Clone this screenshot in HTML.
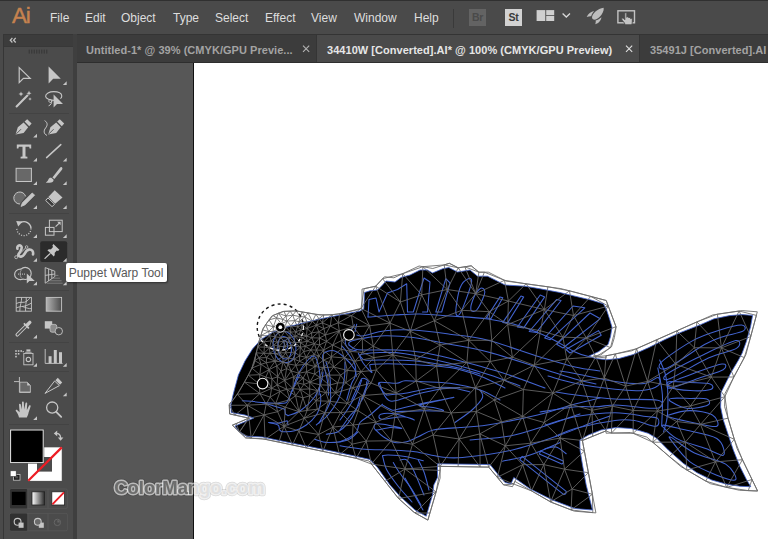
<!DOCTYPE html>
<html lang="en">
<head>
<meta charset="utf-8">
<title>Adobe Illustrator - Puppet Warp Tool</title>
<style>
*{box-sizing:border-box;margin:0;padding:0}
html,body{width:768px;height:539px;overflow:hidden;background:#535353;font-family:"Liberation Sans",sans-serif}
#app{position:relative;width:768px;height:539px;overflow:hidden;background:#4a4a4a}
/* menu bar */
#menubar{position:absolute;left:0;top:0;width:768px;height:34px;background:#4a4a4a;border-top:1px solid #303030}
#menubar .logo{position:absolute;left:12px;top:2px;font-size:22.4px;line-height:26px;color:#c5824f;letter-spacing:-1.1px;-webkit-text-stroke:0.45px #c5824f}
#menubar .mi{position:absolute;top:9px;font-size:12px;line-height:16px;color:#dedede;white-space:nowrap}
#menubar .vdiv{position:absolute;left:453px;top:8px;width:1px;height:19px;background:#3a3a3a}
.sq{position:absolute;top:8px;width:17px;height:17px;font-size:10.5px;font-weight:bold;line-height:17px;text-align:center;letter-spacing:-0.3px}
/* tab bar */
#tabs{position:absolute;left:76px;top:34px;width:692px;height:29px;background:#3c3c3c;border-left:1px solid #343434;border-top:1px solid #343434;border-bottom:1px solid #2e2e2e}
#gap{position:absolute;left:73px;top:34px;width:4px;height:505px;background:#3f3f3f}
#tabs .tab{position:absolute;top:0;height:27px;font-size:11px;font-weight:bold;line-height:30px;overflow:hidden;white-space:nowrap;color:#a3a3a3;letter-spacing:0.04px}
#tabs .tab.on{background:#4a4a4a;color:#e6e6e6;border-left:1px solid #353535;border-right:1px solid #353535}
#tabs .x{position:absolute;top:0;font-weight:normal;font-size:13px;line-height:27px}
/* canvas */
#canvas{position:absolute;left:77px;top:63px;width:691px;height:476px;background:#575757}
#art{position:absolute;left:116px;top:0;width:575px;height:476px;background:#fff;border-left:1px solid #111}
/* toolbar */
#tools{position:absolute;left:3px;top:34px;width:71px;height:505px;background:#4b4b4b;border:1px solid #363636;border-bottom:0;border-right-color:#3f3f3f}
#tools .hd{position:absolute;left:0;top:0;width:69px;height:11.5px;background:#3c3c3c;border-bottom:1px solid #383838}
#tools .sep{position:absolute;left:5px;width:60px;height:1px;background:#434343}
#tip{position:absolute;left:66px;top:263px;width:100.5px;height:18.5px;background:#fff;border-radius:2px;box-shadow:1px 1px 2px rgba(0,0,0,0.45);font-size:12px;line-height:20px;color:#585858;padding-left:2.7px;white-space:nowrap;overflow:hidden}
#wm{position:absolute;left:0;top:0}
svg{position:absolute;left:0;top:0;overflow:visible}
</style>
</head>
<body>
<div id="app">
  <div id="menubar">
    <div class="logo">Ai</div>
    <div class="mi" style="left:50px">File</div>
    <div class="mi" style="left:85px">Edit</div>
    <div class="mi" style="left:121px">Object</div>
    <div class="mi" style="left:173px">Type</div>
    <div class="mi" style="left:215px">Select</div>
    <div class="mi" style="left:265px">Effect</div>
    <div class="mi" style="left:311px">View</div>
    <div class="mi" style="left:354px">Window</div>
    <div class="mi" style="left:414px">Help</div>
    <div class="vdiv"></div>
    <div class="sq" style="left:469px;background:#636363;color:#4a4a4a">Br</div>
    <div class="sq" style="left:505px;background:#d2d2d2;color:#3a3a3a">St</div>
    <svg width="768" height="34" viewBox="0 1 768 34" style="left:0;top:0">
      <g fill="#cfcfcf">
        <rect x="536.6" y="10.1" width="8.7" height="10.9"/><rect x="546.2" y="10.1" width="8" height="5.1"/><rect x="546.2" y="16" width="8" height="5"/>
        <path d="M562.6 13.6 L566.3 17 L570 13.6" fill="none" stroke="#d8d8d8" stroke-width="1.3"/>
        <g fill="#bdbdbd"><path d="M603.600 7.700 C604.300 11.400 601 16.600 596.300 19.300 C594.600 20.200 592.300 19.600 592 17.800 C591.800 13.600 597.800 8.400 603.600 7.700 Z"/>
        <path d="M594.200 10.900 C591 11.300 588 13.600 586.700 17 C588.600 16.300 590.200 16 591.200 16.200 C591.700 14.200 592.800 12.300 594.200 10.900 Z"/>
        <path d="M601.400 17.300 C601.200 20.400 598.800 23.300 595.200 24.300 C595.800 22.600 595.900 21.200 595.600 20.400 C597.800 20 599.800 18.800 601.400 17.300 Z"/></g>
        <rect x="617.9" y="10.8" width="16.6" height="12" fill="none" stroke="#c4c4c4" stroke-width="1.4"/>
        <path d="M625.200 24.800 C624.400 22.200 622.600 21 621.800 19.400 C621.400 18.200 622.800 17.600 623.700 18.500 L624.800 19.700 V13.600 C624.800 12.300 626.800 12.300 626.800 13.600 V17.300 C627 16.400 628.600 16.400 628.800 17.500 V18 C629 17.100 630.600 17.300 630.600 18.200 V18.800 C630.800 18.100 632.300 18.200 632.300 19.300 V22 C632.300 23.100 632 24 631.500 24.800 Z" fill="#c4c4c4" stroke="#4a4a4a" stroke-width="0.9"/>
      </g>
    </svg>
  </div>
    <div id="tabs">
    <div class="tab" style="left:0;width:239px;padding-left:9px">Untitled-1* @ 39% (CMYK/GPU Previe...</div>
    <div class="tab on" style="left:239px;width:324px;padding-left:10px">34410W [Converted].AI* @ 100% (CMYK/GPU Preview)</div>
    <svg width="692" height="28" viewBox="77 35 692 28" style="left:0;top:0"><path d="M303 45.700l6.200 6.200M309.200 45.700l-6.200 6.200" stroke="#b4b4b4" stroke-width="1.1" fill="none"/><path d="M626 45.700l6.200 6.200M632.200 45.700l-6.200 6.200" stroke="#e0e0e0" stroke-width="1.1" fill="none"/></svg>
    <div class="tab" style="left:563px;width:128px;padding-left:10px">35491J [Converted].AI</div>
  </div>
  <div id="canvas"><div id="art"></div></div>
<svg id="fish" width="768" height="539" viewBox="0 0 768 539">
  <defs><clipPath id="fc"><path d="M234.4 389.8 L238.4 375.0 L245.0 361.0 L252.5 349.0 L261.0 339.5 L272.5 332.4 L285.0 327.6 L302.5 323.2 L320.0 319.0 L340.0 315.0 L360.0 311.0 L363.8 308.8 L364.5 292.5 L370.0 290.8 L377.5 290.0 L382.5 285.0 L386.0 281.0 L395.0 282.0 L401.0 277.5 L410.0 275.0 L420.0 270.0 L427.5 270.0 L432.5 273.0 L442.5 268.8 L448.8 267.5 L457.5 272.0 L470.0 270.0 L477.5 276.2 L487.5 276.2 L497.5 281.2 L505.0 285.0 L525.0 286.2 L540.0 288.8 L560.0 292.5 L575.0 296.2 L591.0 300.0 L603.4 303.8 L606.6 310.0 L609.7 319.4 L612.0 327.2 L610.5 336.6 L608.1 344.4 L598.8 351.5 L588.6 356.2 L595.6 358.5 L606.6 359.8 L619.0 358.5 L633.1 354.6 L648.8 347.6 L664.4 339.8 L680.0 332.7 L700.0 324.9 L714.0 318.8 L729.7 315.6 L742.2 314.6 L752.6 315.4 L750.5 327.0 L746.3 341.7 L742.2 353.0 L738.5 360.0 L731.0 372.5 L726.0 382.5 L721.0 392.5 L720.6 407.0 L723.3 420.0 L728.3 435.0 L733.3 450.0 L740.0 466.7 L746.7 480.0 L750.8 486.7 L740.0 486.3 L726.7 484.2 L711.7 480.0 L696.7 472.5 L683.3 463.3 L668.3 450.0 L656.7 438.3 L648.3 433.3 L640.0 430.8 L631.0 428.5 L616.0 427.5 L601.0 430.0 L588.5 435.0 L579.8 440.0 L580.0 450.0 L582.5 465.0 L586.2 485.0 L592.5 510.0 L575.0 508.6 L552.5 500.0 L530.0 488.8 L517.5 480.0 L513.8 477.5 L511.0 483.8 L505.0 482.5 L497.5 473.8 L490.0 464.5 L437.5 463.8 L437.5 477.5 L433.8 485.0 L432.5 495.0 L428.8 507.5 L426.2 516.2 L415.0 510.0 L400.0 496.2 L390.0 485.0 L377.5 467.5 L370.0 459.5 L350.0 455.0 L332.5 451.2 L307.5 446.2 L282.5 441.2 L262.5 437.0 L246.2 436.2 L238.8 431.2 L235.0 426.0 L237.5 425.0 L253.8 418.0 L245.0 415.0 L231.2 412.5 L231.0 404.5 L232.8 396.0 Z"/></clipPath><path id="msh" d="M434.3 320.7L440.2 345.0M347.3 370.4L344.3 358.0M311.9 337.8L307.3 341.2M402.7 273.7L382.6 278.7M297.6 326.9L300.8 329.9M271.2 340.8L273.9 344.9M344.3 358.0L333.7 367.0M265.1 439.3L284.0 426.2M273.9 344.9L275.0 349.2M451.2 412.9L459.1 439.0M721.4 347.9L694.3 347.7M382.6 278.7L375.7 286.2M734.3 439.3L728.0 418.2M433.1 435.0L451.2 412.9M322.8 451.4L339.5 454.8M700.5 424.4L676.7 421.5M335.5 392.9L337.7 382.9M290.2 311.1L292.8 315.2M317.6 390.7L325.9 392.7M306.4 336.1L300.8 329.9M308.0 312.9L312.4 321.4M728.0 418.2L724.9 396.7M278.2 332.6L275.1 336.8M322.4 322.9L323.9 328.6M323.8 314.9L315.9 314.3M489.1 311.7L491.8 340.3M300.3 389.4L303.9 384.4M289.8 337.6L294.8 336.3M501.6 421.9L522.6 416.4M352.6 387.8L335.5 392.9M550.6 501.9L543.8 464.6M490.2 361.5L491.8 340.3M507.7 324.5L491.8 340.3M290.2 311.1L285.9 316.1M415.1 513.0L429.9 513.0M564.5 469.2L560.1 438.1M287.0 321.1L285.0 326.4M284.6 331.5L289.8 337.6M361.0 371.7L371.1 383.1M315.9 314.3L308.0 312.9M595.8 356.8L606.0 355.8M320.0 377.3L309.8 382.3M283.0 362.0L275.1 361.2M280.8 337.6L275.1 336.8M494.3 399.9L504.1 380.3M271.2 340.8L269.6 335.8M339.5 454.8L332.9 427.1M429.9 513.0L436.1 491.9M353.3 326.8L338.2 322.8M440.1 466.4L459.1 439.0M739.1 311.0L717.4 314.2M728.0 418.2L700.5 424.4M271.9 378.7L269.0 369.7M259.1 341.2L263.9 341.9M444.2 264.9L449.3 263.3M362.6 352.5L362.3 338.5M478.9 272.2L475.7 293.7M608.3 306.1L606.2 300.5M717.4 314.2L696.9 321.9M294.8 336.3L290.6 332.0M278.5 313.2L273.0 315.5M711.3 377.1L690.5 405.9M633.2 433.3L657.4 411.1M319.5 345.0L316.5 350.1M324.8 412.7L317.3 409.2M544.2 422.5L522.6 416.4M319.0 356.0L323.5 360.1M310.9 349.9L314.4 343.7M361.0 308.4L390.0 323.1M273.0 315.5L269.1 319.9M531.5 490.9L550.6 501.9M611.4 433.1L633.2 410.5M297.6 326.9L302.0 325.1M324.8 412.7L304.2 418.3M276.7 365.9L269.0 369.7M362.6 352.5L350.2 351.3M290.9 325.9L295.6 331.9M311.9 337.8L319.5 338.0M717.4 314.2L721.4 347.9M271.2 340.8L277.3 342.2M280.8 337.6L277.3 342.2M610.5 347.6L616.0 326.7M685.4 442.1L715.5 461.9M299.6 361.4L295.9 365.3M256.3 352.8L251.9 368.1M395.3 413.7L396.1 392.9M362.3 395.6L376.0 422.2M586.3 338.0L562.9 337.1M273.9 344.9L279.1 346.4M269.1 319.9L273.4 326.7M256.3 352.8L258.8 357.9M566.8 358.9L552.9 393.1M547.9 286.8L544.3 309.6M277.7 376.8L281.0 371.1M322.4 322.9L330.3 326.0M508.4 301.0L489.1 311.7M283.0 362.0L281.0 371.1M416.2 381.0L392.8 354.9M284.6 331.5L285.0 326.4M488.7 467.1L479.8 433.9M264.0 414.9L277.6 411.7M376.4 370.0L371.1 383.1M300.5 347.2L305.5 346.3M298.8 373.2L306.6 371.8M501.6 421.9L505.3 445.8M288.0 363.9L288.8 358.1M395.3 413.7L391.3 440.7M494.3 399.9L476.4 411.5M501.6 421.9L494.3 399.9M464.8 266.8L471.2 265.8M726.7 487.4L752.0 479.5M458.1 466.6L459.1 439.0M275.6 353.7L275.0 349.2M299.0 321.7L306.9 321.9M331.8 314.7L322.4 322.9M284.6 380.5L286.6 368.6M351.5 315.5L369.6 325.8M284.0 426.2L264.0 414.9M444.2 264.9L458.2 267.8M513.7 484.0L531.5 490.9M322.8 451.4L318.7 434.5M237.2 394.2L247.2 405.2M345.9 382.8L337.7 382.9M309.8 395.8L300.3 389.4M282.9 319.5L281.3 323.8M275.1 336.8L269.6 335.8M439.7 388.4L451.2 412.9M347.3 370.4L355.1 361.2M312.4 359.4L314.3 354.5M323.5 350.2L323.5 360.1M410.3 331.3L392.8 354.9M595.8 356.8L610.5 347.6M331.3 356.8L333.7 367.0M292.9 388.5L300.3 389.4M307.2 328.5L302.0 325.1M534.2 365.2L523.4 389.5M280.2 391.3L271.6 388.3M290.9 325.9L290.6 332.0M283.0 362.0L288.0 363.9M304.2 418.3L318.7 434.5M288.0 363.9L295.9 365.3M332.9 427.1L352.0 444.2M323.4 367.6L323.5 360.1M355.1 361.2L374.0 357.6M257.7 347.0L256.3 352.8M582.4 440.5L592.0 410.3M290.1 399.6L275.7 403.6M286.8 389.3L277.1 384.9M341.9 340.3L341.4 349.2M461.8 310.3L447.2 289.5M369.6 325.8L373.3 346.3M358.2 410.8L340.6 412.6M512.4 357.2L490.2 361.5M319.5 345.0L314.4 343.7M352.6 387.8L347.3 403.4M392.8 354.9L373.3 346.3M302.9 397.8L299.0 411.7M314.6 374.1L320.0 377.3M669.4 456.6L685.4 442.1M633.2 410.5L647.5 381.4M504.5 280.3L475.7 293.7M748.3 490.6L757.6 491.0M256.3 352.8L254.7 360.7M733.9 377.0L711.3 377.1M320.3 384.9L317.6 390.7M711.3 377.1L721.4 347.9M344.3 358.0L341.4 349.2M526.1 283.8L504.5 280.3M362.3 338.5L353.3 326.8M412.5 444.3L391.3 440.7M276.6 317.8L273.4 326.7M302.1 311.9L300.3 316.7M458.1 466.6L440.1 466.4M339.3 330.8L326.6 341.4M275.1 336.8L277.3 342.2M299.6 355.9L306.1 357.3M424.4 408.7L416.2 381.0M239.5 432.0L251.2 438.2M286.8 389.3L292.9 388.5M292.5 445.0L298.9 431.0M504.5 280.3L484.4 272.2M229.3 405.3L234.9 415.1M608.3 306.1L573.5 315.5M480.1 467.0L488.7 467.1M436.6 365.8L415.7 359.5M333.7 367.0L323.4 367.6M444.2 264.9L447.2 289.5M284.6 331.5L280.8 337.6M229.3 405.3L229.6 413.9M251.2 438.2L265.1 439.3M497.3 477.3L505.3 445.8M705.8 481.1L726.7 487.4M353.3 326.8L369.6 325.8M606.0 430.9L612.4 406.2M352.6 387.8L361.0 371.7M234.9 415.1L248.5 418.1M540.5 330.8L562.9 337.1M259.8 374.7L265.9 377.1M306.6 364.3L295.9 365.3M340.6 412.6L347.3 403.4M464.8 266.8L478.9 272.2M726.7 487.4L748.3 490.6M251.2 438.2L245.7 437.9M257.7 347.0L264.4 347.1M294.8 336.3L300.5 342.6M251.9 368.1L259.8 374.7M320.3 384.9L320.0 377.3M312.4 321.4L318.9 318.6M234.9 415.1L247.2 405.2M269.4 347.9L273.9 344.9M398.6 498.5L405.0 469.0M562.9 337.1L544.3 309.6M339.5 454.8L352.0 444.2M328.7 401.2L347.3 403.4M260.8 335.6L268.6 331.5M364.1 288.7L361.0 308.4M429.9 513.0L427.9 520.1M275.1 336.8L271.2 340.8M271.9 378.7L277.1 384.9M340.6 375.1L345.9 382.8M293.5 376.8L303.1 378.2M733.9 377.0L721.4 347.9M265.1 439.3L264.0 414.9M356.1 458.3L371.4 464.0M320.3 384.9L329.4 385.2M302.0 325.1L300.8 329.9M319.0 356.0L316.5 350.1M268.6 331.5L269.6 335.8M303.1 378.2L298.8 373.2M303.6 351.6L310.9 349.9M299.1 334.3L295.6 331.9M733.9 377.0L744.3 357.6M263.9 341.9L269.6 335.8M475.5 387.6L451.2 412.9M504.5 280.3L508.4 301.0M285.6 352.9L291.3 345.3M303.1 378.2L309.8 382.3M375.7 286.2L390.0 323.1M304.2 418.3L299.0 411.7M361.0 308.4L369.6 325.8M497.3 477.3L522.7 464.7M676.8 330.9L694.3 347.7M318.8 331.8L316.3 325.0M302.1 311.9L296.2 310.9M329.4 385.2L325.9 392.7M262.6 329.9L268.6 331.5M422.9 266.7L421.7 294.9M564.5 469.2L543.8 464.6M303.6 351.6L305.5 346.3M402.7 273.7L400.4 302.0M544.2 422.5L570.7 404.3M371.1 383.1L362.3 395.6M314.4 343.7L307.3 341.2M436.1 491.9L405.0 469.0M273.0 315.5L276.6 317.8M501.6 421.9L476.4 411.5M311.9 337.8L318.8 331.8M657.4 411.1L676.7 421.5M260.8 335.6L269.6 335.8M256.3 352.8L263.9 353.4M285.0 346.5L288.1 342.1M277.7 376.8L284.6 380.5M571.1 509.9L592.4 494.3M248.3 375.2L259.2 384.0M270.0 353.3L275.1 361.2M282.9 356.7L280.0 352.8M494.3 399.9L523.4 389.5M285.6 352.9L280.0 352.8M239.5 432.0L248.5 418.1M237.2 394.2L259.9 393.6M282.9 356.7L275.6 353.7M309.6 388.9L303.9 384.4M316.3 325.0L318.9 318.6M332.7 345.1L341.9 340.3M339.5 454.8L356.1 458.3M249.0 418.2L247.2 405.2M582.4 440.5L560.1 438.1M263.9 353.4L258.8 357.9M339.7 313.7L351.5 315.5M595.8 356.8L586.3 338.0M361.0 371.7L345.9 382.8M564.5 469.2L572.1 489.0M317.6 390.7L309.8 395.8M307.2 328.5L306.4 336.1M299.6 355.9L294.1 359.1M304.2 418.3L317.3 409.2M636.6 348.7L647.5 381.4M581.7 380.9L592.0 410.3M724.9 396.7L733.9 377.0M615.3 354.0L604.3 378.1M750.7 336.6L721.4 347.9M508.4 301.0L544.3 309.6M306.4 336.1L302.3 337.7M276.7 365.9L283.0 362.0M297.6 326.9L299.0 321.7M294.7 320.6L299.0 321.7M299.0 321.7L300.3 316.7M358.2 410.8L362.3 395.6M329.4 385.2L327.5 375.1M323.4 367.6L329.3 362.6M247.2 405.2L264.0 414.9M280.8 337.6L278.2 332.6M299.6 355.9L299.6 361.4M308.0 312.9L302.1 311.9M405.0 469.0L412.5 444.3M362.3 338.5L369.6 325.8M392.8 354.9L396.1 392.9M300.5 342.6L294.4 342.4M266.3 362.7L269.0 369.7M291.3 345.3L294.4 342.4M540.5 330.8L507.7 324.5M341.9 340.3L350.2 351.3M436.1 491.9L440.1 470.4M316.3 325.0L323.9 328.6M331.3 356.8L341.4 349.2M306.6 364.3L312.4 359.4M478.9 272.2L471.2 265.8M273.4 326.7L281.3 323.8M294.1 359.1L294.6 352.1M657.4 411.1L647.5 381.4M329.4 385.2L337.7 382.9M696.9 321.9L676.8 330.9M269.4 347.9L271.2 340.8M479.8 433.9L501.6 421.9M468.7 340.3L434.3 320.7M284.6 331.5L279.5 328.0M330.3 326.0L325.3 335.0M302.1 311.9L304.9 316.8M289.8 337.6L294.4 342.4M314.4 343.7L319.5 338.0M288.1 342.1L283.8 341.2M344.3 358.0L350.2 351.3M294.7 320.6L300.3 316.7M306.6 371.8L309.8 382.3M273.2 331.4L275.1 336.8M314.3 354.5L316.5 350.1M534.2 365.2L552.9 393.1M676.8 330.9L656.7 339.8M647.5 381.4L675.8 364.3M271.6 388.3L259.2 384.0M584.4 451.1L582.4 440.5M269.1 319.9L265.6 324.8M273.2 331.4L269.6 335.8M306.4 336.1L307.3 341.2M277.3 342.2L283.8 341.2M328.7 401.2L315.9 400.8M320.3 384.9L325.9 392.7M261.1 364.3L269.0 369.7M306.9 321.9L304.9 316.8M300.5 342.6L305.5 346.3M550.6 501.9L571.1 509.9M278.8 442.1L284.0 426.2M592.7 436.3L606.0 430.9M265.6 324.8L262.6 329.9M280.8 337.6L289.8 337.6M306.6 364.3L315.1 366.6M284.0 426.2L298.9 431.0M700.5 424.4L715.5 461.9M398.6 498.5L436.1 491.9M353.3 326.8L341.9 340.3M571.1 509.9L592.8 512.6M461.8 310.3L434.3 320.7M259.8 374.7L269.0 369.7M616.0 326.7L608.3 306.1M328.7 401.2L325.9 392.7M315.9 400.8L325.9 392.7M270.0 353.3L266.6 357.6M416.2 381.0L415.7 359.5M302.9 397.8L307.1 410.4M673.3 386.4L657.4 411.1M530.7 443.2L560.1 438.1M276.7 365.9L275.1 361.2M315.9 314.3L318.9 318.6M608.3 306.1L590.8 296.4M254.7 360.7L251.9 368.1M395.3 413.7L376.0 422.2M340.6 375.1L333.7 367.0M347.3 370.4L361.0 371.7M352.6 387.8L345.9 382.8M290.6 332.0L295.6 331.9M611.4 433.1L633.2 433.3M302.0 325.1L306.9 321.9M294.6 352.1L291.3 345.3M251.9 368.1L248.3 375.2M254.7 360.7L258.8 357.9M468.7 340.3L489.1 311.7M305.5 346.3L307.3 341.2M604.3 378.1L581.7 380.9M633.2 433.3L652.8 442.2M566.8 358.9L562.9 337.1M550.6 501.9L572.1 489.0M475.5 387.6L494.3 399.9M608.3 306.1L586.3 338.0M287.0 321.1L281.3 323.8M353.1 425.0L352.0 444.2M475.5 387.6L439.7 388.4M355.1 361.2L350.2 351.3M276.6 317.8L281.3 323.8M300.5 347.2L294.4 342.4M332.7 345.1L339.3 330.8M335.5 392.9L328.7 401.2M331.8 314.7L330.3 326.0M376.4 370.0L396.1 392.9M588.4 472.7L564.5 469.2M371.4 464.0L405.0 469.0M726.7 487.4L715.5 461.9M293.5 376.8L291.2 370.9M306.4 336.1L311.5 332.9M307.2 328.5L300.8 329.9M303.6 351.6L306.1 357.3M400.4 302.0L410.3 331.3M410.3 331.3L415.7 359.5M278.8 442.1L292.5 445.0M271.9 378.7L271.6 388.3M294.7 320.6L292.8 315.2M461.8 310.3L489.1 311.7M319.0 356.0L315.1 366.6M284.6 331.5L290.6 332.0M451.2 412.9L476.4 411.5M326.6 341.4L325.3 335.0M358.2 410.8L353.1 425.0M523.4 389.5L504.1 380.3M302.9 397.8L300.3 389.4M280.2 391.3L275.7 403.6M364.1 288.7L375.7 286.2M440.1 466.4L433.1 435.0M292.9 388.5L284.6 380.5M329.4 385.2L320.0 377.3M307.1 410.4L315.9 400.8M633.2 410.5L625.6 386.1M310.9 349.9L314.3 354.5M309.6 388.9L300.3 389.4M390.0 323.1L369.6 325.8M612.4 406.2L604.3 378.1M750.7 336.6L739.1 311.0M284.2 311.4L285.9 316.1M275.1 361.2L266.6 357.6M281.0 371.1L284.6 380.5M285.0 346.5L283.8 341.2M266.3 362.7L258.8 357.9M259.9 393.6L259.2 384.0M284.6 380.5L291.2 370.9M283.0 362.0L286.6 368.6M280.2 391.3L270.1 397.1M475.5 387.6L504.1 380.3M280.0 352.8L275.0 349.2M344.3 358.0L355.1 361.2M690.5 405.9L676.7 421.5M526.1 283.8L544.3 309.6M299.0 321.7L304.9 316.8M573.5 315.5L544.3 309.6M299.0 411.7L295.6 395.8M266.2 404.2L277.6 411.7M294.1 359.1L288.8 358.1M331.3 356.8L344.3 358.0M332.7 345.1L341.4 349.2M590.8 296.4L606.2 300.5M309.8 382.3L303.9 384.4M652.8 442.2L657.4 411.1M265.1 439.3L278.8 442.1M353.3 326.8L339.3 330.8M362.3 338.5L341.9 340.3M293.5 376.8L297.4 382.9M324.8 412.7L332.9 427.1M331.3 356.8L323.5 350.2M424.4 408.7L412.5 444.3M261.1 364.3L258.8 357.9M312.4 321.4L306.9 321.9M285.9 316.1L292.8 315.2M748.3 490.6L752.0 479.5M331.3 356.8L329.3 362.6M289.8 337.6L290.6 332.0M633.2 433.3L633.2 410.5M312.4 321.4L304.9 316.8M280.8 337.6L283.8 341.2M592.4 494.3L572.1 489.0M361.0 308.4L339.7 313.7M552.9 393.1L544.2 422.5M534.2 365.2L566.8 358.9M314.6 374.1L306.6 371.8M302.9 397.8L295.6 395.8M249.0 418.2L251.2 438.2M297.4 382.9L303.9 384.4M371.4 464.0L385.0 481.3M294.1 359.1L295.9 365.3M742.4 459.7L715.5 461.9M339.7 313.7L338.2 322.8M475.7 293.7L447.2 289.5M625.6 386.1L604.3 378.1M294.8 336.3L302.3 337.7M582.4 440.5L570.7 404.3M265.6 324.8L273.4 326.7M311.5 332.9L318.8 331.8M315.9 400.8L317.6 390.7M254.7 360.7L261.1 364.3M376.4 370.0L361.0 371.7M744.3 357.6L750.7 336.6M700.5 424.4L690.5 405.9M552.9 393.1L522.6 416.4M291.2 370.9L295.9 365.3M285.9 316.1L282.9 319.5M286.8 389.3L284.6 380.5M606.0 430.9L592.0 410.3M273.4 326.7L279.5 328.0M362.6 352.5L355.1 361.2M497.3 477.3L503.6 484.9M311.9 337.8L314.4 343.7M484.4 272.2L475.7 293.7M392.8 354.9L374.0 357.6M315.1 366.6L323.5 360.1M327.5 375.1L323.4 367.6M290.9 325.9L285.0 326.4M269.0 369.7L265.9 377.1M290.1 399.6L299.0 411.7M362.3 338.5L373.3 346.3M269.4 347.9L270.0 353.3M340.6 375.1L327.5 375.1M475.5 387.6L476.4 411.5M458.1 466.6L480.1 467.0M236.1 423.6L232.4 425.2M282.9 356.7L288.8 358.1M436.6 365.8L439.7 388.4M480.1 467.0L459.1 439.0M273.2 331.4L273.4 326.7M280.0 352.8L279.1 346.4M285.4 407.2L275.7 403.6M534.2 365.2L540.5 330.8M382.6 278.7L400.4 302.0M318.8 331.8L325.3 335.0M361.0 371.7L374.0 357.6M314.6 374.1L309.8 382.3M433.1 435.0L412.5 444.3M468.7 340.3L440.2 345.0M366.2 441.1L353.1 425.0M566.8 358.9L586.3 338.0M299.1 334.3L294.8 336.3M347.3 370.4L345.9 382.8M422.9 266.7L447.2 289.5M303.1 378.2L297.4 382.9M512.4 357.2L491.8 340.3M287.0 321.1L292.8 315.2M340.6 375.1L337.7 382.9M522.7 464.7L505.3 445.8M479.8 433.9L459.1 439.0M307.2 328.5L306.9 321.9M356.1 458.3L352.0 444.2M309.6 388.9L317.6 390.7M315.1 366.6L312.4 359.4M265.9 377.1L259.2 384.0M260.8 335.6L259.1 341.2M303.1 378.2L303.9 384.4M312.4 321.4L316.3 325.0M636.6 348.7L625.6 386.1M288.1 342.1L291.3 345.3M400.4 302.0L421.7 294.9M259.8 374.7L259.2 384.0M275.7 403.6L266.2 404.2M317.6 390.7L309.8 382.3M296.2 310.9L290.2 311.1M686.8 470.0L685.4 442.1M249.0 418.2L239.5 432.0M752.0 479.5L757.6 491.0M711.3 377.1L694.3 347.7M507.7 324.5L489.1 311.7M320.3 384.9L309.8 382.3M287.0 321.1L282.9 319.5M282.9 356.7L283.0 362.0M410.3 331.3L390.0 323.1M458.2 267.8L449.3 263.3M293.5 376.8L292.9 388.5M276.6 317.8L282.9 319.5M459.1 439.0L476.4 411.5M318.7 434.5L298.9 431.0M296.2 310.9L300.3 316.7M306.6 364.3L306.1 357.3M249.0 418.2L248.5 418.1M307.2 328.5L312.4 321.4M259.9 393.6L271.6 388.3M656.7 339.8L636.6 348.7M285.0 346.5L285.6 352.9M694.3 347.7L675.8 364.3M307.1 410.4L299.0 411.7M590.8 296.4L573.5 315.5M434.3 320.7L447.2 289.5M513.7 484.0L522.7 464.7M497.3 477.3L488.7 467.1M234.9 415.1L229.6 413.9M266.3 362.7L275.1 361.2M522.7 464.7L530.7 443.2M356.1 458.3L366.2 441.1M508.4 301.0L475.7 293.7M376.4 370.0L374.0 357.6M294.7 320.6L297.6 326.9M284.6 380.5L277.1 384.9M236.1 423.6L248.5 418.1M436.6 365.8L416.2 381.0M269.1 319.9L276.6 317.8M281.0 371.1L286.6 368.6M318.8 331.8L323.9 328.6M332.7 345.1L323.5 350.2M371.4 464.0L391.3 440.7M248.3 375.2L259.8 374.7M366.2 441.1L391.3 440.7M595.8 356.8L581.7 380.9M280.2 391.3L290.1 399.6M531.5 490.9L522.7 464.7M490.2 361.5L504.1 380.3M323.5 350.2L316.5 350.1M347.3 403.4L362.3 395.6M248.5 418.1L247.2 405.2M339.3 330.8L341.9 340.3M395.3 413.7L424.4 408.7M299.6 355.9L294.6 352.1M306.2 447.9L322.8 451.4M534.2 365.2L562.9 337.1M278.2 332.6L279.5 328.0M592.8 512.6L592.4 494.3M244.4 382.2L259.2 384.0M610.5 347.6L586.3 338.0M611.4 433.1L606.0 430.9M315.1 366.6L306.6 371.8M424.4 408.7L451.2 412.9M415.1 513.0L436.1 491.9M288.0 363.9L286.6 368.6M263.9 353.4L270.0 353.3M512.4 357.2L507.7 324.5M581.7 380.9L570.7 404.3M734.3 439.3L700.5 424.4M280.0 352.8L275.6 353.7M260.8 335.6L263.9 341.9M508.4 301.0L507.7 324.5M633.2 410.5L657.4 411.1M331.3 356.8L323.5 360.1M396.1 392.9L362.3 395.6M282.9 356.7L275.1 361.2M307.1 410.4L317.3 409.2M297.4 382.9L300.3 389.4M390.0 323.1L373.3 346.3M323.9 328.6L325.3 335.0M595.8 356.8L604.3 378.1M625.6 386.1L612.4 406.2M314.4 343.7L305.5 346.3M306.1 357.3L314.3 354.5M278.2 332.6L273.2 331.4M402.7 273.7L421.7 294.9M522.7 464.7L543.8 464.6M338.2 322.8L330.3 326.0M468.7 340.3L466.9 362.3M322.4 322.9L316.3 325.0M280.2 391.3L286.8 389.3M314.4 343.7L316.5 350.1M296.2 310.9L292.8 315.2M440.1 470.4L405.0 469.0M275.7 403.6L270.1 397.1M315.9 314.3L312.4 321.4M522.6 416.4L505.3 445.8M584.4 451.1L560.1 438.1M262.6 329.9L260.8 335.6M297.6 326.9L290.9 325.9M284.6 331.5L278.2 332.6M531.5 490.9L543.8 464.6M304.9 316.8L300.3 316.7M294.7 320.6L290.9 325.9M285.0 346.5L291.3 345.3M327.5 375.1L333.7 367.0M275.6 353.7L275.1 361.2M263.9 341.9L264.4 347.1M615.3 354.0L606.0 355.8M530.7 443.2L544.2 422.5M335.5 392.9L345.9 382.8M475.5 387.6L466.9 362.3M294.1 359.1L288.0 363.9M322.8 451.4L332.9 427.1M329.3 362.6L323.5 360.1M590.8 296.4L569.5 290.8M294.1 359.1L299.6 361.4M269.4 347.9L264.4 347.1M284.0 426.2L304.2 418.3M347.3 370.4L333.7 367.0M552.9 393.1L570.7 404.3M319.0 356.0L314.3 354.5M416.2 381.0L439.7 388.4M530.7 443.2L522.6 416.4M248.3 375.2L244.4 382.2M263.9 353.4L269.4 347.9M686.8 470.0L715.5 461.9M436.6 365.8L440.2 345.0M410.3 331.3L434.3 320.7M324.8 412.7L340.6 412.6M326.6 341.4L319.5 345.0M652.8 442.2L669.4 456.6M395.3 413.7L412.5 444.3M405.0 469.0L391.3 440.7M285.4 407.2L277.6 411.7M285.0 346.5L280.0 352.8M285.6 352.9L294.6 352.1M306.6 364.3L299.6 361.4M270.0 353.3L275.0 349.2M724.9 396.7L700.5 424.4M257.7 347.0L263.9 341.9M339.3 330.8L325.3 335.0M306.4 336.1L299.1 334.3M278.5 313.2L285.9 316.1M314.6 374.1L323.4 367.6M444.2 264.9L422.9 266.7M319.5 345.0L323.5 350.2M330.3 326.0L323.9 328.6M458.2 267.8L447.2 289.5M464.8 266.8L458.2 267.8M726.7 487.4L742.4 459.7M319.5 345.0L319.5 338.0M306.2 447.9L318.7 434.5M299.0 321.7L302.0 325.1M586.3 338.0L573.5 315.5M307.1 410.4L309.8 395.8M314.6 374.1L315.1 366.6M292.5 445.0L306.2 447.9M371.1 383.1L396.1 392.9M285.4 407.2L290.1 399.6M606.0 355.8L604.3 378.1M288.1 342.1L294.4 342.4M376.4 370.0L392.8 354.9M306.1 357.3L312.4 359.4M268.6 331.5L273.4 326.7M276.7 365.9L281.0 371.1M278.5 313.2L282.9 319.5M742.4 459.7L734.3 439.3M358.2 410.8L376.0 422.2M291.2 370.9L298.8 373.2M592.7 436.3L582.4 440.5M332.9 427.1L318.7 434.5M475.7 293.7L489.1 311.7M271.9 378.7L277.7 376.8M685.4 442.1L676.7 421.5M289.8 337.6L288.1 342.1M696.9 321.9L721.4 347.9M277.7 376.8L269.0 369.7M584.4 451.1L564.5 469.2M304.2 418.3L307.1 410.4M512.4 357.2L540.5 330.8M421.7 294.9L447.2 289.5M307.3 341.2L302.3 337.7M292.8 315.2L300.3 316.7M331.8 314.7L323.8 314.9M292.5 445.0L284.0 426.2M306.6 364.3L298.8 373.2M673.3 386.4L711.3 377.1M560.1 438.1L544.2 422.5M299.1 334.3L302.3 337.7M284.0 426.2L277.6 411.7M306.4 336.1L311.9 337.8M569.5 290.8L544.3 309.6M416.2 381.0L396.1 392.9M433.1 435.0L424.4 408.7M340.6 412.6L353.1 425.0M350.2 351.3L341.4 349.2M468.7 340.3L490.2 361.5M297.6 326.9L295.6 331.9M724.9 396.7L690.5 405.9M318.8 331.8L319.5 338.0M249.0 418.2L264.0 414.9M392.8 354.9L390.0 323.1M361.0 308.4L375.7 286.2M269.4 347.9L275.0 349.2M276.7 365.9L277.7 376.8M507.7 324.5L544.3 309.6M271.6 388.3L270.1 397.1M307.2 328.5L311.5 332.9M319.0 356.0L312.4 359.4M283.8 341.2L279.1 346.4M310.9 349.9L306.1 357.3M266.6 357.6L258.8 357.9M375.7 286.2L400.4 302.0M259.9 393.6L266.2 404.2M294.7 320.6L287.0 321.1M530.7 443.2L505.3 445.8M424.4 408.7L439.7 388.4M279.5 328.0L285.0 326.4M299.1 334.3L300.8 329.9M332.9 427.1L353.1 425.0M475.5 387.6L490.2 361.5M311.5 332.9L316.3 325.0M335.5 392.9L347.3 403.4M571.1 509.9L572.1 489.0M323.8 314.9L322.4 322.9M458.2 267.8L475.7 293.7M362.3 338.5L350.2 351.3M352.6 387.8L371.1 383.1M239.5 432.0L245.7 437.9M340.6 412.6L328.7 401.2M752.0 479.5L742.4 459.7M479.8 433.9L505.3 445.8M229.3 405.3L247.2 405.2M385.0 481.3L405.0 469.0M362.6 352.5L373.3 346.3M263.9 353.4L264.4 347.1M303.6 351.6L300.5 347.2M415.1 513.0L427.9 520.1M652.8 442.2L685.4 442.1M286.8 389.3L290.1 399.6M287.0 321.1L290.9 325.9M339.7 313.7L331.8 314.7M290.6 332.0L285.0 326.4M261.1 364.3L266.3 362.7M512.4 357.2L504.1 380.3M323.4 367.6L315.1 366.6M306.1 357.3L299.6 361.4M385.0 481.3L398.6 498.5M294.6 352.1L300.5 347.2M275.7 403.6L277.6 411.7M277.3 342.2L279.1 346.4M436.6 365.8L466.9 362.3M279.5 328.0L281.3 323.8M526.1 283.8L508.4 301.0M398.6 498.5L415.1 513.0M750.7 336.6L756.4 315.4M440.2 345.0L415.7 359.5M468.7 340.3L491.8 340.3M331.8 314.7L338.2 322.8M282.9 356.7L285.6 352.9M353.3 326.8L351.5 315.5M724.9 396.7L711.3 377.1M696.9 321.9L694.3 347.7M293.5 376.8L298.8 373.2M332.7 345.1L326.6 341.4M265.6 324.8L268.6 331.5M284.0 426.2L285.4 407.2M756.4 315.4L739.1 311.0M290.2 311.1L284.2 311.4M362.6 352.5L374.0 357.6M466.9 362.3L440.2 345.0M263.9 353.4L266.6 357.6M347.3 370.4L340.6 375.1M424.4 408.7L396.1 392.9M285.6 352.9L288.8 358.1M278.5 313.2L276.6 317.8M734.3 439.3L715.5 461.9M290.1 399.6L295.6 395.8M552.9 393.1L581.7 380.9M264.0 414.9L266.2 404.2M285.9 316.1L287.0 321.1M358.2 410.8L347.3 403.4M306.2 447.9L298.9 431.0M490.2 361.5L466.9 362.3M464.8 266.8L475.7 293.7M284.2 311.4L278.5 313.2M268.6 331.5L273.2 331.4M327.5 375.1L337.7 382.9M257.7 347.0L263.9 353.4M497.3 477.3L513.7 484.0M636.6 348.7L615.3 354.0M277.3 342.2L273.9 344.9M440.1 466.4L405.0 469.0M566.8 358.9L581.7 380.9M484.4 272.2L478.9 272.2M251.2 438.2L264.0 414.9M366.2 441.1L376.0 422.2M513.7 484.0L503.6 484.9M279.1 346.4L275.0 349.2M512.4 357.2L534.2 365.2M315.9 400.8L317.3 409.2M328.7 401.2L317.3 409.2M339.3 330.8L330.3 326.0M685.4 442.1L700.5 424.4M303.1 378.2L306.6 371.8M299.6 355.9L303.6 351.6M239.5 432.0L232.4 425.2M592.4 494.3L588.4 472.7M361.0 308.4L351.5 315.5M673.3 386.4L647.5 381.4M259.9 393.6L270.1 397.1M259.1 341.2L257.7 347.0M361.0 371.7L355.1 361.2M494.3 399.9L522.6 416.4M604.3 378.1L592.0 410.3M269.4 347.9L263.9 341.9M306.6 364.3L306.6 371.8M673.3 386.4L675.8 364.3M744.3 357.6L721.4 347.9M550.6 501.9L564.5 469.2M588.4 472.7L584.4 451.1M588.4 472.7L572.1 489.0M261.1 364.3L259.8 374.7M319.0 356.0L323.5 350.2M271.9 378.7L265.9 377.1M488.7 467.1L505.3 445.8M552.9 393.1L523.4 389.5M530.7 443.2L543.8 464.6M440.1 470.4L440.1 466.4M285.4 407.2L299.0 411.7M300.5 342.6L300.5 347.2M291.3 345.3L300.5 347.2M433.1 435.0L459.1 439.0M612.4 406.2L592.0 410.3M547.9 286.8L526.1 283.8M439.7 388.4L466.9 362.3M625.6 386.1L647.5 381.4M294.8 336.3L294.4 342.4M366.2 441.1L352.0 444.2M292.9 388.5L295.6 395.8M270.0 353.3L275.6 353.7M299.6 355.9L300.5 347.2M392.8 354.9L415.7 359.5M300.5 342.6L302.3 337.7M236.1 423.6L239.5 432.0M293.5 376.8L284.6 380.5M251.9 368.1L261.1 364.3M633.2 410.5L612.4 406.2M295.6 395.8L300.3 389.4M237.2 394.2L229.3 405.3M534.2 365.2L504.1 380.3M461.8 310.3L475.7 293.7M298.8 373.2L295.9 365.3M611.4 433.1L612.4 406.2M324.8 412.7L318.7 434.5M289.8 337.6L283.8 341.2M277.7 376.8L277.1 384.9M410.3 331.3L440.2 345.0M300.8 329.9L295.6 331.9M283.0 362.0L288.8 358.1M395.3 413.7L362.3 395.6M652.8 442.2L676.7 421.5M285.0 346.5L279.1 346.4M676.8 330.9L675.8 364.3M352.6 387.8L362.3 395.6M400.4 302.0L390.0 323.1M259.9 393.6L247.2 405.2M391.3 440.7L376.0 422.2M273.2 331.4L279.5 328.0M335.5 392.9L325.9 392.7M656.7 339.8L647.5 381.4M284.0 426.2L299.0 411.7M244.4 382.2L259.9 393.6M281.3 323.8L285.0 326.4M323.4 367.6L320.0 377.3M711.3 377.1L675.8 364.3M300.5 342.6L307.3 341.2M288.0 363.9L291.2 370.9M421.7 294.9L434.3 320.7M523.4 389.5L522.6 416.4M656.7 339.8L675.8 364.3M569.5 290.8L573.5 315.5M479.8 433.9L476.4 411.5M592.7 436.3L592.0 410.3M315.9 400.8L309.8 395.8M307.2 328.5L316.3 325.0M310.9 349.9L305.5 346.3M332.7 345.1L331.3 356.8M340.6 412.6L332.9 427.1M323.8 314.9L318.9 318.6M371.4 464.0L366.2 441.1M310.9 349.9L316.5 350.1M309.6 388.9L309.8 382.3M374.0 357.6L373.3 346.3M326.6 341.4L323.5 350.2M468.7 340.3L461.8 310.3M353.1 425.0L376.0 422.2M327.5 375.1L320.0 377.3M570.7 404.3L592.0 410.3M269.0 369.7L275.1 361.2M569.5 290.8L547.9 286.8M560.1 438.1L570.7 404.3M304.2 418.3L298.9 431.0M326.6 341.4L319.5 338.0M280.2 391.3L277.1 384.9M560.1 438.1L543.8 464.6M540.5 330.8L544.3 309.6M615.3 354.0L625.6 386.1M329.4 385.2L335.5 392.9M271.6 388.3L265.9 377.1M319.5 338.0L325.3 335.0M244.4 382.2L237.2 394.2M421.7 294.9L410.3 331.3M351.5 315.5L338.2 322.8M302.9 397.8L309.8 395.8M294.8 336.3L295.6 331.9M616.0 326.7L586.3 338.0M271.6 388.3L277.1 384.9M292.9 388.5L297.4 382.9M311.5 332.9L311.9 337.8M669.4 456.6L686.8 470.0M266.2 404.2L270.1 397.1M690.5 405.9L657.4 411.1M739.1 311.0L721.4 347.9M294.6 352.1L288.8 358.1M291.2 370.9L286.6 368.6M322.4 322.9L318.9 318.6M705.8 481.1L715.5 461.9M480.1 467.0L479.8 433.9M286.8 389.3L295.6 395.8M308.0 312.9L304.9 316.8M339.3 330.8L338.2 322.8M686.8 470.0L705.8 481.1M247.2 405.2L266.2 404.2M440.1 466.4L412.5 444.3M422.9 266.7L402.7 273.7M309.6 388.9L309.8 395.8M333.7 367.0L329.3 362.6M271.2 340.8L263.9 341.9M595.8 356.8L566.8 358.9M266.3 362.7L266.6 357.6M573.5 315.5L562.9 337.1M673.3 386.4L690.5 405.9M324.8 412.7L328.7 401.2"/></defs>
  <use href="#msh" fill="none" stroke="#5c5c5c" stroke-width="0.8"/>
  <circle cx="280.3" cy="327.1" r="23.1" fill="none" stroke="#161616" stroke-width="1.4" stroke-dasharray="3 3.2"/>
  <path d="M234.4 389.8 L238.4 375.0 L245.0 361.0 L252.5 349.0 L261.0 339.5 L272.5 332.4 L285.0 327.6 L302.5 323.2 L320.0 319.0 L340.0 315.0 L360.0 311.0 L363.8 308.8 L364.5 292.5 L370.0 290.8 L377.5 290.0 L382.5 285.0 L386.0 281.0 L395.0 282.0 L401.0 277.5 L410.0 275.0 L420.0 270.0 L427.5 270.0 L432.5 273.0 L442.5 268.8 L448.8 267.5 L457.5 272.0 L470.0 270.0 L477.5 276.2 L487.5 276.2 L497.5 281.2 L505.0 285.0 L525.0 286.2 L540.0 288.8 L560.0 292.5 L575.0 296.2 L591.0 300.0 L603.4 303.8 L606.6 310.0 L609.7 319.4 L612.0 327.2 L610.5 336.6 L608.1 344.4 L598.8 351.5 L588.6 356.2 L595.6 358.5 L606.6 359.8 L619.0 358.5 L633.1 354.6 L648.8 347.6 L664.4 339.8 L680.0 332.7 L700.0 324.9 L714.0 318.8 L729.7 315.6 L742.2 314.6 L752.6 315.4 L750.5 327.0 L746.3 341.7 L742.2 353.0 L738.5 360.0 L731.0 372.5 L726.0 382.5 L721.0 392.5 L720.6 407.0 L723.3 420.0 L728.3 435.0 L733.3 450.0 L740.0 466.7 L746.7 480.0 L750.8 486.7 L740.0 486.3 L726.7 484.2 L711.7 480.0 L696.7 472.5 L683.3 463.3 L668.3 450.0 L656.7 438.3 L648.3 433.3 L640.0 430.8 L631.0 428.5 L616.0 427.5 L601.0 430.0 L588.5 435.0 L579.8 440.0 L580.0 450.0 L582.5 465.0 L586.2 485.0 L592.5 510.0 L575.0 508.6 L552.5 500.0 L530.0 488.8 L517.5 480.0 L513.8 477.5 L511.0 483.8 L505.0 482.5 L497.5 473.8 L490.0 464.5 L437.5 463.8 L437.5 477.5 L433.8 485.0 L432.5 495.0 L428.8 507.5 L426.2 516.2 L415.0 510.0 L400.0 496.2 L390.0 485.0 L377.5 467.5 L370.0 459.5 L350.0 455.0 L332.5 451.2 L307.5 446.2 L282.5 441.2 L262.5 437.0 L246.2 436.2 L238.8 431.2 L235.0 426.0 L237.5 425.0 L253.8 418.0 L245.0 415.0 L231.2 412.5 L231.0 404.5 L232.8 396.0 Z" fill="#000" stroke="#4263cf" stroke-width="0.8" stroke-linejoin="round"/>
  <g id="blue" fill="none" stroke="#4263cf" stroke-width="1.05" stroke-linecap="round" stroke-linejoin="round">
<path d="M368.0 317.0 L369.0 299.5 L376.0 298.0 L379.0 312.0 L387.5 293.0 L397.5 289.5 L406.7 283.7 L407.5 312.0 L413.3 312.0 L424.0 278.0 L430.0 282.0 L427.5 312.0 L422.5 312.0"/>
<path d="M435.8 312.0 L445.8 278.7 L450.0 282.8 L441.7 312.0Z"/>
<path d="M455.8 312.0C455.7 307.9 457.9 293.6 460.0 288.0C462.1 282.4 466.4 279.4 468.3 278.7C470.2 278.0 472.6 278.0 471.3 283.7C470.0 289.4 463.1 308.1 460.5 312.8C457.9 317.5 455.9 316.1 455.8 312.0Z"/>
<path d="M470.8 309.5C470.4 307.3 472.5 300.5 474.0 297.0C475.5 293.5 478.3 289.9 480.0 288.7C481.7 287.4 483.5 288.4 484.2 289.5C484.9 290.6 485.4 291.9 484.2 295.3C482.9 298.7 478.9 307.6 476.7 310.0C474.5 312.4 471.2 311.7 470.8 309.5Z"/>
<path d="M486.4 317.8 L500.0 296.9 L502.8 297.8 L490.9 318.7Z"/>
<path d="M502.8 322.4 L521.0 296.0 L523.7 296.9 L507.3 323.3Z"/>
<path d="M517.4 327.0 L540.2 295.0 L544.7 296.9 L523.7 327.9Z"/>
<path d="M529.2 331.5 L556.6 299.6 L561.1 300.5 L536.5 332.4Z"/>
<path d="M544.7 337.9 L573.0 306.0 L584.8 307.8 L550.2 339.7Z"/>
<path d="M556.6 344.3 L590.0 313.0 L600.3 318.7 L563.0 348.0Z"/>
<path d="M566.0 349.5 L598.5 330.6 L601.2 335.2 L570.0 353.0Z"/>
<path d="M368.0 317.0C372.5 316.7 386.3 315.5 395.0 315.0C403.7 314.5 410.8 313.8 420.0 314.0C429.2 314.2 438.7 315.2 450.0 316.0C461.3 316.8 476.3 317.3 488.0 319.0C499.7 320.7 509.7 322.8 520.0 326.0C530.3 329.2 540.8 333.7 550.0 338.0C559.2 342.3 568.3 348.8 575.0 352.0C581.7 355.2 587.5 356.2 590.0 357.0"/>
<path d="M356.7 324.2 L355.0 331.7"/>
<path d="M356.7 335.0C357.8 335.1 358.6 336.5 363.3 335.8C368.0 335.1 376.7 331.8 385.0 330.8C393.3 329.8 402.5 329.4 413.3 330.0C424.1 330.6 437.4 332.5 449.8 334.2C462.2 335.9 473.0 336.5 488.0 340.3C503.0 344.1 525.5 352.6 540.0 357.0C554.5 361.4 565.0 364.7 575.0 367.0C585.0 369.3 595.8 370.3 600.0 371.0"/>
<path d="M349.0 345.0C349.2 344.4 347.6 342.8 350.0 341.7C352.4 340.6 357.5 339.3 363.3 338.3C369.1 337.3 376.7 335.9 385.0 335.8C393.3 335.7 402.5 336.1 413.3 337.5C424.1 338.9 437.4 341.8 449.8 344.2C462.2 346.6 473.0 348.0 488.0 352.0C503.0 356.0 525.5 363.5 540.0 368.0C554.5 372.5 565.7 376.3 575.0 379.0C584.3 381.7 592.5 383.2 596.0 384.0"/>
<path d="M349.0 345.0C350.0 345.7 352.6 348.2 355.0 349.0C357.4 349.8 356.4 349.8 363.3 350.0C370.2 350.2 386.7 349.6 396.7 350.0C406.7 350.4 414.4 351.1 423.3 352.5C432.2 353.9 437.0 355.1 449.8 358.3C462.6 361.6 484.1 367.1 500.0 372.0C515.9 376.9 537.5 385.3 545.0 388.0"/>
<path d="M360.0 355.8C360.3 355.5 358.4 354.8 361.7 354.2C365.0 353.6 372.8 352.6 380.0 352.5C387.2 352.4 393.4 351.9 405.0 353.7C416.6 355.5 435.6 359.8 449.8 363.3C464.0 366.9 478.3 371.2 490.0 375.0C501.7 378.8 515.0 384.2 520.0 386.0"/>
<path d="M360.0 355.8C360.8 356.5 361.7 359.3 365.0 360.0C368.3 360.7 371.9 359.9 380.0 360.0C388.1 360.1 401.7 359.8 413.3 360.8C424.9 361.8 438.7 363.8 449.8 366.0C460.9 368.2 475.0 372.7 480.0 374.0"/>
<path d="M358.3 353.3C359.1 355.0 361.1 360.1 363.3 363.3C365.5 366.5 370.6 371.9 371.7 372.5C372.8 373.1 369.7 368.1 370.0 366.7C370.3 365.3 367.5 364.6 373.3 364.2C379.1 363.8 392.2 363.6 405.0 364.2C417.8 364.8 437.3 365.5 449.8 367.5C462.3 369.5 470.8 372.6 480.0 376.0C489.2 379.4 500.8 386.0 505.0 388.0"/>
<path d="M386.7 395.0C385.9 394.2 382.9 392.1 381.7 390.0C380.4 387.9 376.7 383.6 379.2 382.5C381.7 381.4 392.4 383.6 396.7 383.3C401.0 383.0 400.6 381.1 405.0 380.8C409.4 380.5 415.8 381.3 423.3 381.7C430.8 382.1 440.4 381.9 449.8 383.3C459.2 384.7 471.6 387.2 480.0 390.0C488.4 392.8 496.7 398.3 500.0 400.0"/>
<path d="M386.7 395.0C389.8 394.7 397.8 394.4 405.0 393.3C412.2 392.2 422.5 389.3 430.0 388.3C437.5 387.3 443.1 386.9 449.8 387.5C456.5 388.1 466.6 391.2 470.0 392.0"/>
<path d="M459.8 427.5C464.4 427.1 474.6 427.1 487.5 425.0C500.4 422.9 522.9 418.5 537.5 415.0C552.1 411.5 564.6 406.8 575.0 404.0C585.4 401.2 595.8 399.0 600.0 398.0"/>
<path d="M455.0 422.5C457.8 420.4 467.4 414.2 472.0 410.0C476.6 405.8 481.2 400.8 482.5 397.5C483.8 394.2 480.4 391.2 480.0 390.0"/>
<path d="M340.0 445.8C344.2 446.4 356.7 448.5 365.0 449.2C373.3 449.9 381.7 449.6 390.0 450.0C398.3 450.4 406.7 450.6 415.0 451.7C423.3 452.8 432.1 455.7 440.0 456.7C447.9 457.7 450.4 458.6 462.5 457.5C474.6 456.4 496.2 453.8 512.5 450.0C528.8 446.2 546.8 439.6 560.0 435.0C573.2 430.4 583.7 425.7 592.0 422.5C600.3 419.3 607.0 417.1 610.0 416.0"/>
<path d="M470.0 440.0C476.7 439.3 497.5 438.3 510.0 436.0C522.5 433.7 533.3 429.7 545.0 426.0C556.7 422.3 574.2 416.0 580.0 414.0"/>
<path d="M659.7 360.0C660.6 362.2 663.7 368.4 665.0 373.0C666.3 377.6 667.1 380.4 667.5 387.3C667.9 394.2 668.1 407.2 667.5 414.6C666.9 422.1 664.2 429.1 663.6 432.0"/>
<path d="M657.8 367.9C658.6 372.4 661.8 385.3 662.4 395.0C663.0 404.7 661.8 420.8 661.7 426.0"/>
<path d="M661.0 362.5C665.2 357.9 683.0 346.0 692.8 340.6C702.6 335.2 711.9 332.6 720.0 330.0C728.1 327.4 737.6 324.9 741.5 325.0C745.4 325.1 746.6 328.9 743.4 330.9C740.1 332.9 728.5 334.7 722.0 337.0C715.5 339.3 713.6 339.4 704.5 344.5C695.4 349.6 674.8 364.9 667.5 367.9C660.2 370.9 656.8 367.1 661.0 362.5Z"/>
<path d="M667.5 373.7C673.3 369.6 693.1 359.7 704.5 354.2C715.9 348.7 730.4 341.6 735.7 340.6C741.0 339.6 741.0 345.5 736.4 348.4C731.8 351.3 719.5 353.0 708.4 358.1C697.2 363.2 676.3 376.2 669.5 378.8C662.7 381.4 661.7 377.8 667.5 373.7Z"/>
<path d="M669.5 383.5C673.1 381.1 684.0 376.9 692.8 373.7C701.5 370.4 716.9 364.6 722.0 364.0C727.1 363.4 726.8 367.5 723.2 369.8C719.6 372.1 709.2 374.6 700.6 377.6C692.0 380.6 676.6 387.0 671.4 388.0C666.2 389.0 665.9 385.9 669.5 383.5Z"/>
<path d="M668.9 381.7C672.2 380.9 683.1 382.1 690.0 382.5C696.9 382.9 706.7 382.7 710.1 383.9C713.5 385.1 714.0 388.4 710.6 389.5C707.2 390.6 696.8 391.0 690.0 390.6C683.2 390.2 673.5 388.7 670.0 387.2C666.5 385.7 665.6 382.5 668.9 381.7Z"/>
<path d="M671.2 398.4C674.3 397.8 684.1 398.3 690.0 398.4C695.9 398.5 703.8 397.9 706.8 399.0C709.8 400.1 711.0 403.4 707.9 405.0C704.8 406.6 694.0 408.9 687.9 408.4C681.8 407.8 674.0 403.4 671.2 401.7C668.4 400.0 668.1 398.9 671.2 398.4Z"/>
<path d="M668.9 415.0C672.2 413.9 682.8 410.6 690.0 410.6C697.2 410.6 707.9 412.4 712.4 415.0C716.9 417.6 719.8 424.9 716.8 426.2C713.8 427.5 702.3 424.4 694.5 422.9C686.7 421.4 674.3 418.6 670.0 417.3C665.7 416.0 665.6 416.1 668.9 415.0Z"/>
<path d="M663.4 425.1C666.4 425.1 674.5 427.4 683.4 429.6C692.3 431.8 710.1 434.2 716.8 438.5C723.5 442.8 725.4 453.5 723.5 455.2C721.6 456.9 713.1 451.1 705.7 448.5C698.3 445.9 685.7 442.8 679.0 439.6C672.3 436.5 668.2 432.0 665.6 429.6C663.0 427.2 660.4 425.1 663.4 425.1Z"/>
<path d="M671.2 437.4C674.9 439.3 685.4 448.6 694.5 453.0C703.6 457.4 718.8 459.7 725.7 464.1C732.6 468.6 737.2 477.9 735.7 479.7C734.2 481.5 724.4 478.2 716.8 475.2C709.2 472.2 697.4 467.5 690.0 461.9C682.6 456.3 675.4 445.9 672.3 441.8C669.2 437.7 667.5 435.5 671.2 437.4Z"/>
<path d="M560.0 371.0C562.7 371.4 566.8 371.9 576.0 373.7C585.2 375.4 603.7 379.9 615.0 381.5C626.3 383.1 636.9 384.1 644.0 383.5C651.1 382.9 655.4 377.3 657.8 377.6C660.2 377.9 661.1 383.2 658.5 385.4C655.9 387.5 649.2 389.9 642.0 390.5C634.8 391.1 626.0 390.5 615.0 389.3C604.0 388.1 587.2 385.7 576.0 383.5C564.8 381.3 552.7 377.2 548.0 376.0"/>
<path d="M556.0 392.0C559.3 392.5 566.2 393.8 576.0 395.0C585.8 396.2 601.4 398.1 615.0 399.0C628.6 399.9 650.5 398.7 657.8 400.2C665.0 401.7 662.4 406.9 658.5 408.0C654.6 409.1 641.6 407.3 634.4 406.8C627.1 406.3 621.5 404.9 615.0 404.9C608.5 404.9 602.0 406.5 595.5 406.8C589.0 407.1 585.2 405.9 576.0 406.8C566.8 407.7 546.0 411.1 540.0 412.0"/>
<path d="M545.0 425.0C550.2 423.6 564.3 418.6 576.0 416.5C587.7 414.4 603.3 412.7 615.0 412.7C626.7 412.7 638.9 415.5 646.0 416.5C653.1 417.5 656.2 416.9 657.8 418.5C659.4 420.1 659.7 426.0 655.8 426.3C651.9 426.6 641.2 421.5 634.4 420.5C627.6 419.5 624.7 419.2 615.0 420.5C605.3 421.8 585.8 425.6 576.0 428.2C566.2 430.8 559.3 434.7 556.0 436.0"/>
<path d="M502.5 461.2C507.1 460.2 520.4 458.1 530.0 455.0C539.6 451.9 555.0 444.6 560.0 442.5"/>
<path d="M519.8 459.6L563.8 494.6Q566.6 494.2 566.2 491.4L522.2 456.4Z"/>
<path d="M539.3 454.1L561.8 464.1Q564.1 463.2 563.2 460.9L540.7 450.9Z"/>
<path d="M545.0 448.8C546.8 448.5 552.5 446.2 556.0 447.0C559.5 447.8 564.5 452.6 566.2 453.8"/>
<path d="M379.2 382.5C379.9 384.3 381.8 390.4 383.3 393.3C384.8 396.2 386.4 398.8 388.3 400.0C390.2 401.2 390.3 401.8 395.0 400.8C399.7 399.8 409.2 396.1 416.7 394.2C424.2 392.3 432.8 390.3 440.0 389.2C447.2 388.1 456.5 387.8 459.8 387.5"/>
<path d="M395.0 410.0C398.3 409.2 407.5 406.7 415.0 405.0C422.5 403.3 433.6 401.2 440.0 400.0C446.4 398.8 456.6 396.7 453.3 397.5C450.0 398.3 423.3 403.3 420.0 405.0C416.7 406.7 429.4 406.5 433.3 407.5C437.2 408.5 445.0 410.2 443.3 410.8C441.6 411.4 431.4 410.7 423.3 410.8C415.2 410.9 399.7 411.6 395.0 411.7"/>
<path d="M382.5 405.0C384.0 405.8 389.6 409.2 391.7 410.0C393.8 410.8 394.4 410.0 395.0 410.0"/>
<path d="M380.8 414.2C383.3 413.4 391.1 413.2 396.7 414.2C402.3 415.2 413.1 419.6 414.2 420.0C415.3 420.4 408.7 416.8 403.3 416.7C397.9 416.6 385.4 419.6 381.7 419.2C377.9 418.8 378.3 415.0 380.8 414.2Z"/>
<path d="M375.0 424.2C376.2 423.2 378.9 423.5 383.3 424.2C387.8 424.9 400.6 427.8 401.7 428.3C402.8 428.9 394.3 427.2 390.0 427.5C385.7 427.8 378.3 430.6 375.8 430.0C373.3 429.4 373.8 425.2 375.0 424.2Z"/>
<path d="M375.8 430.0C377.1 431.1 380.1 434.6 383.3 436.7C386.5 438.8 391.1 441.7 395.0 442.5C398.9 443.3 402.8 442.7 406.7 441.7C410.6 440.7 413.9 438.6 418.3 436.7C422.7 434.8 426.4 431.5 433.3 430.0C440.2 428.5 455.4 427.9 459.8 427.5"/>
<path d="M361.7 380.0C360.9 382.2 358.9 388.6 356.7 393.3C354.5 398.0 351.1 403.9 348.3 408.3C345.5 412.8 341.4 418.1 340.0 420.0"/>
<path d="M366.7 381.7C366.4 383.6 366.7 388.9 365.0 393.3C363.3 397.7 359.2 404.6 356.7 408.3C354.2 412.1 352.8 412.2 350.0 415.8C347.2 419.4 341.7 427.6 340.0 430.0"/>
<path d="M382.5 404.2C380.4 406.0 373.8 411.9 370.0 415.0C366.2 418.1 362.2 419.7 360.0 422.5C357.8 425.3 358.6 429.1 356.7 431.7C354.8 434.3 351.1 436.6 348.3 438.3C345.5 440.0 341.4 441.1 340.0 441.7"/>
<path d="M382.5 455.8C383.5 455.7 384.3 454.9 388.3 455.0C392.3 455.1 400.9 455.7 406.7 456.7C412.5 457.7 420.5 460.1 423.3 460.8"/>
<path d="M382.5 455.8C383.2 458.1 384.1 464.8 386.7 469.8C389.3 474.8 393.8 480.6 398.0 486.0C402.2 491.4 409.7 499.3 412.0 502.0"/>
<path d="M393.3 462.5C394.2 464.1 396.1 467.8 399.0 472.0C401.9 476.2 407.3 482.5 411.0 488.0C414.7 493.5 419.3 502.2 421.0 505.0"/>
<path d="M400.0 460.0C401.1 460.0 404.5 458.4 406.7 460.0C408.9 461.6 410.4 464.0 413.3 469.8C416.2 475.6 422.2 490.8 424.0 495.0"/>
<path d="M418.3 460.0C419.2 462.0 422.2 467.0 424.0 472.0C425.8 477.0 428.2 487.0 429.0 490.0"/>
<path d="M405.0 478.0C406.7 481.0 412.0 490.7 415.0 496.0C418.0 501.3 421.7 507.7 423.0 510.0"/>
<path d="M242.2 400.8C245.4 401.1 255.6 401.5 261.3 402.5C267.0 403.5 272.4 405.6 276.3 406.7C280.2 407.8 283.3 408.8 284.7 409.2"/>
<path d="M284.7 409.2 L285.5 414.2 L288.0 415.5"/>
<path d="M261.3 402.5C264.9 402.6 278.6 403.7 283.0 403.3C287.4 402.9 286.1 403.1 288.0 400.0C289.9 396.9 292.8 389.2 294.7 385.0C296.6 380.8 298.9 376.7 299.7 375.0"/>
<path d="M268.8 422.5C270.3 422.9 276.2 423.8 278.0 425.0C279.8 426.2 278.9 428.9 279.7 430.0C280.5 431.1 280.5 431.6 283.0 431.7C285.5 431.8 290.8 431.9 294.7 430.8C298.6 429.7 302.7 427.6 306.3 425.0C309.9 422.4 313.9 418.6 316.3 415.0C318.7 411.4 319.8 406.8 320.5 403.3C321.2 399.8 320.5 395.6 320.5 394.0"/>
<path d="M268.8 422.5 L278.0 423.3 L287.2 420.8 L288.0 425.0"/>
<path d="M288.0 415.8C290.2 414.8 296.9 413.2 301.3 410.0C305.8 406.8 311.4 401.4 314.7 396.7C318.0 392.0 319.9 385.8 321.3 381.7C322.7 377.6 322.7 373.6 323.0 372.0"/>
<path d="M316.3 425.0C318.2 423.3 324.4 419.2 328.0 415.0C331.6 410.8 335.5 405.0 338.0 400.0C340.5 395.0 341.9 389.2 343.0 385.0C344.1 380.8 344.4 378.8 344.7 375.0C345.0 371.2 344.9 364.2 345.0 362.0"/>
<path d="M318.8 423.3C320.6 420.0 327.8 408.6 329.7 403.3C331.6 398.0 330.5 396.4 330.5 391.7C330.5 387.0 330.4 379.9 329.7 375.0C328.9 370.1 326.6 364.2 326.0 362.0"/>
<path d="M326.3 434.2C328.2 433.8 334.4 433.5 338.0 431.7C341.6 429.9 344.8 426.9 347.8 423.3C350.8 419.7 354.0 414.2 356.0 410.0C358.0 405.8 359.3 400.0 360.0 398.0"/>
<path d="M314.7 439.2C316.9 439.8 322.5 442.4 328.0 442.5C333.5 442.6 342.8 441.8 347.8 440.0C352.8 438.2 356.3 433.3 358.0 432.0"/>
<path d="M290.5 395.0C291.9 391.3 295.9 378.8 298.8 373.0C301.7 367.2 305.4 362.8 308.0 360.0C310.6 357.2 312.7 354.7 314.6 356.2C316.5 357.7 318.3 364.9 319.2 369.2C320.1 373.5 320.0 377.7 320.0 382.0C320.0 386.3 319.2 392.8 319.0 395.0"/>
<path d="M328.5 395.0C328.4 392.8 328.2 386.3 327.6 382.0C327.0 377.7 325.6 373.6 324.8 369.0C324.0 364.4 321.5 357.4 323.0 354.4C324.5 351.3 330.3 350.1 334.0 350.7C337.7 351.3 341.6 354.9 345.0 358.0C348.4 361.1 352.6 365.9 354.5 369.0C356.4 372.1 356.0 375.3 356.3 376.6"/>
<path d="M354.5 324.7C353.6 326.2 350.6 331.2 349.0 334.0C347.4 336.8 345.2 338.9 345.2 341.4C345.2 343.9 347.1 347.2 349.0 348.8C350.9 350.4 355.1 350.4 356.3 350.7"/>
<path d="M341.7 345.8C342.5 346.8 344.5 348.5 346.7 351.7C348.9 354.9 353.6 360.8 355.0 365.0C356.4 369.2 355.6 373.6 355.0 376.7C354.4 379.8 353.1 379.4 351.7 383.3C350.3 387.2 347.5 397.2 346.7 400.0"/>
<path d="M351.7 400.0C353.1 396.9 358.1 385.3 360.0 381.7C361.9 378.1 361.9 378.3 363.3 378.3C364.7 378.3 368.0 379.8 368.3 381.7C368.6 383.6 366.1 386.9 365.0 390.0C363.9 393.1 362.2 398.3 361.7 400.0"/>
<ellipse cx="284.5" cy="346.9" rx="11.3" ry="15.8" transform="rotate(-9 284.5 346.9)"/><ellipse cx="284.6" cy="347.8" rx="6.8" ry="11.3" transform="rotate(-7 284.6 347.8)"/><path d="M283.2 340.5 C285.6 339.6 288 342.4 287.8 346 C287.6 349.4 285.2 350.6 283.6 349 C282.4 347.8 284.6 346 284.4 344 C284.3 342.6 283.2 341.8 283.2 340.500Z"/>
  </g>
  <use href="#msh" fill="none" stroke="#6a6a6a" stroke-width="0.85" clip-path="url(#fc)"/>
  <path d="M249.0 418.2 L232.4 425.2 L245.7 437.9 L262.3 438.7 L369.1 461.0 L398.1 498.1 L413.5 512.1 L427.9 520.1 L440.1 478.1 L440.1 466.4 L488.7 467.1 L503.6 484.9 L512.5 486.7 L514.9 481.4 L551.5 502.4 L574.4 511.2 L595.9 512.9 L582.4 440.5 L606.0 430.9 L606.0 433.2 L630.4 432.5 L646.7 437.0 L680.8 466.5 L710.3 483.7 L739.6 490.3 L757.6 491.0 L737.1 448.6 L724.6 406.6 L725.0 393.5 L745.9 354.6 L757.3 311.8 L742.2 310.6 L712.8 314.9 L631.7 350.8 L606.0 355.8 L606.0 358.0 L596.0 356.8 L593.4 356.0 L600.8 354.9 L611.5 346.8 L614.4 337.5 L616.1 327.0 L606.2 300.5 L560.9 288.6 L506.1 281.1 L488.4 272.2 L478.9 272.2 L471.2 265.8 L458.2 267.8 L449.3 263.3 L432.8 268.5 L419.1 266.0 L393.9 277.8 L384.4 276.8 L375.7 286.2 L362.0 289.1 L362.0 307.8 L359.4 309.4 L338.2 314.1 L331.0 314.8 L320.0 315.0 L296.0 310.9 L283.0 311.4 L271.8 316.0 L263.0 328.5 L260.1 338.1 L259.4 338.8 L259.6 339.2 L256.1 353.5 L254.0 364.0 L249.7 372.6 L244.4 382.2 L239.0 391.8 L232.7 400.4 L229.6 403.4 L229.5 403.4 L229.3 404.3 L229.6 413.9 Z" fill="none" stroke="#6c6c6c" stroke-width="0.9"/>
  <circle cx="280.3" cy="327.1" r="23.1" fill="none" stroke="#ececec" stroke-width="1.3" stroke-dasharray="3 3.2" clip-path="url(#fc)"/>
  <g id="pins">
    <circle cx="280.3" cy="327.2" r="4.9" fill="#000" stroke="#fff" stroke-width="0.8"/>
    <circle cx="280.3" cy="327.2" r="1.9" fill="#fff"/>
    <circle cx="348.9" cy="334.9" r="5.3" fill="#000" stroke="#f4f4f4" stroke-width="1.1"/>
    <circle cx="262.6" cy="383.6" r="5.3" fill="#000" stroke="#f4f4f4" stroke-width="1.1"/>
  </g>
</svg>

  <div id="tools">
    <div class="hd"></div>
<div class="sep" style="top:78px"></div><div class="sep" style="top:178px"></div><div class="sep" style="top:255px"></div><div class="sep" style="top:307px"></div><div class="sep" style="top:336px"></div><div class="sep" style="top:389px"></div>
  </div>
<div id="gap"></div>
<svg id="toolsvg" width="768" height="539" viewBox="0 0 768 539">
  <g fill="#c6c6c6" stroke="none">
    <!-- collapse chevrons -->
    <path d="M12.4 37.9 L10.3 40.2 L12.4 42.5 M15.7 37.9 L13.6 40.2 L15.7 42.5" fill="none" stroke="#c2c2c2" stroke-width="1.3"/>
    <!-- grip -->
    <g fill="#3a3a3a"><rect x="28.6" y="49.6" width="1.3" height="4"/><rect x="31.1" y="49.6" width="1.3" height="4"/><rect x="33.6" y="49.6" width="1.3" height="4"/><rect x="36.1" y="49.6" width="1.3" height="4"/><rect x="38.6" y="49.6" width="1.3" height="4"/><rect x="41.1" y="49.6" width="1.3" height="4"/><rect x="43.6" y="49.6" width="1.3" height="4"/><rect x="46.1" y="49.6" width="1.3" height="4"/></g>
    <!-- flyout triangles -->
    <g id="fly">
      <path d="M66.7 81.2v3.8h-3.8z"/>
      <path d="M37 133.8v3.8h-3.8z"/>
      <path d="M37 157.8v3.8h-3.8z"/><path d="M66.7 157.8v3.8h-3.8z"/>
      <path d="M37 181.3v3.8h-3.8z"/><path d="M66.7 181.3v3.8h-3.8z"/>
      <path d="M37 205.3v3.8h-3.8z"/><path d="M66.7 205.3v3.8h-3.8z"/>
      <path d="M37 234.3v3.8h-3.8z"/><path d="M66.7 234.3v3.8h-3.8z"/>
      <path d="M37 258v3.8h-3.8z"/>
      <path d="M37 281.5v3.8h-3.8z"/><path d="M66.7 281.5v3.8h-3.8z"/>
      <path d="M37 334.8v3.8h-3.8z"/>
      <path d="M37 363v3.8h-3.8z"/><path d="M66.7 363v3.8h-3.8z"/>
      <path d="M66.7 392.4v3.8h-3.8z"/>
      <path d="M37 416.3v3.8h-3.8z"/>
    </g>
    <!-- row 1: selection / direct selection -->
    <path d="M19.2 67.6 L19.2 82.6 L23.4 78.4 L30.2 78.4 Z" fill="none" stroke="#c6c6c6" stroke-width="1.2" stroke-linejoin="miter"/>
    <path d="M48.6 66.6 L48.6 83.4 L53.2 78.8 L60.8 78.8 Z"/>
    <!-- row 2: magic wand / lasso -->
    <path d="M16.6 106.4 L27.4 95.6" fill="none" stroke="#c6c6c6" stroke-width="2.1" stroke-linecap="round"/>
    <path d="M21 91.5l.7 1.8 1.8.7-1.8.7-.7 1.8-.7-1.8-1.8-.7 1.8-.7z M29 90.6l.7 1.9 1.9.7-1.9.7-.7 1.9-.7-1.9-1.9-.7 1.9-.7z M30 97.2l.5 1.3 1.3.5-1.3.5-.5 1.3-.5-1.3-1.3-.5 1.3-.5z"/>
    <path d="M55.5 100.5 C50 100.5 45.6 98.8 45.6 96.3 C45.6 93.6 49.3 91.6 53.8 91.6 C58.4 91.6 61.8 93.4 61.8 96 C61.8 97.2 61.2 98 60.4 98.7" fill="none" stroke="#c6c6c6" stroke-width="1.1"/>
    <path d="M50.3 99.5 a1.5 1.5 0 1 0 0.1 0 M51.6 100.5 C52 103 51 105 48.6 105.8" fill="none" stroke="#c6c6c6" stroke-width="1"/>
    <path d="M53.6 94.6 L53.6 107.4 L57 104 L63 104 Z"/>
    <!-- row 3: pen / curvature -->
    <g id="pen"><path d="M15.6 134.6 L17.8 127.2 L23.6 122.6 L28.2 127.2 L23.6 133 Z M16.2 134 L20.6 129.6" /><path d="M24.6 121.6 L27.2 119.2 L31.6 123.6 L29.2 126.2 Z"/><path d="M16.4 133.8 L21 129.2" stroke="#4c4c4c" stroke-width="0.9" fill="none"/></g>
    <g transform="translate(32.6 0)"><path d="M15.6 134.6 L17.8 127.2 L23.6 122.6 L28.2 127.2 L23.6 133 Z"/><path d="M24.6 121.6 L27.2 119.2 L31.6 123.6 L29.2 126.2 Z"/><path d="M16.4 133.8 L21 129.2" stroke="#4c4c4c" stroke-width="0.9" fill="none"/></g>
    <path d="M44.6 120.6 C48 122.6 47.6 125.6 45.6 128 C43.4 130.6 43.6 134 47 135.4" fill="none" stroke="#c6c6c6" stroke-width="1"/>
    <!-- row 4: type / line -->
    <path d="M16.8 144.4 H31.2 V148.6 H29.6 L29.2 146.800 H25.5 V156.4 L27.4 156.800 V158.4 H20.6 V156.800 L22.5 156.4 V146.800 H18.8 L18.4 148.6 H16.8 Z"/>
    <path d="M46.6 157.6 L60.8 144.6" fill="none" stroke="#c6c6c6" stroke-width="1.5" stroke-linecap="round"/>
    <!-- row 5: rectangle / brush -->
    <rect x="16.1" y="168.3" width="15.3" height="13.2" fill="#686868" stroke="#c6c6c6" stroke-width="1"/>
    <path d="M61.8 167.2 C62.6 167.8 62.6 168.8 62 169.8 L54.4 179 L52.4 177.4 L59.8 168 C60.4 167.2 61.2 166.8 61.8 167.2 Z"/>
    <path d="M51.6 178 L53.6 179.8 C53.8 181.6 52 182.8 49.6 182.8 C48 182.8 46.6 182.6 45.8 182.4 C47.4 181.6 48 180.4 48.4 179.4 C49 177.8 50.4 177.4 51.6 178 Z"/>
    <!-- row 6: shaper / eraser -->
    <path d="M20 204 A6 6 0 1 1 25.6 196.4" fill="#686868" stroke="#c6c6c6" stroke-width="1"/>
    <path d="M33 193.6 L34.6 195.2 L24.8 205 L21 206.4 L22.4 202.8 L32.2 193 Z" stroke="#c6c6c6" stroke-width="0.8"/>
    <path d="M54.7 190.2 L62.5 197.6 L55.2 203.7 L48.3 197.1 Z"/>
    <path d="M47.9 197.9 L54.6 204.3 L52 206.6 L45.7 200.5 Z" fill="#3c3c3c" stroke="#c6c6c6" stroke-width="1"/>
    <!-- row 7: rotate / scale -->
    <path d="M20.6 222.6 A7 7 0 0 1 31 228.4" fill="none" stroke="#c6c6c6" stroke-width="1.4"/>
    <path d="M31 228.4 A7 7 0 0 1 16.8 228.6" fill="none" stroke="#c6c6c6" stroke-width="1.3" stroke-dasharray="1.1 1.5"/>
    <path d="M16.2 221 L22.6 221.6 L18.2 226.4 Z"/>
    <g fill="none" stroke="#c6c6c6" stroke-width="1"><rect x="49.4" y="220.2" width="12.8" height="11.4"/><rect x="45.4" y="227.4" width="8.6" height="7.8"/><path d="M55.6 226.6 L59.8 222.6" stroke-width="1.2"/></g>
    <path d="M57.2 221.8 H60.6 V225.2 Z"/>
    <!-- row 8: width(warp) / puppet -->
    <rect x="40.2" y="241.2" width="27" height="20.8" rx="2" fill="#2b2b2b"/>
    <path d="M66.7 258v3.8h-3.8z"/>
    <path d="M17.4 248.8 C16.8 246 19.2 244.4 21 246 C23.4 248.2 20 251.6 18.6 254 C17.8 255.6 19 256.8 21 256.6 C25.6 256.2 24.4 250.2 29 249.6 C32 249.2 33.6 251.6 33 254.4" fill="none" stroke="#c6c6c6" stroke-width="2.6" stroke-linecap="round"/>
    <path d="M16.4 257 L26.4 247.2" fill="none" stroke="#c6c6c6" stroke-width="0.9"/>
    <circle cx="16.2" cy="257.2" r="1.5" fill="#4c4c4c" stroke="#c6c6c6" stroke-width="0.8"/><circle cx="26.6" cy="247" r="1.3" fill="#4c4c4c" stroke="#c6c6c6" stroke-width="0.8"/>
    <path d="M53.4 244 L59.4 249.8 L58 251 L56.8 250.6 L54.6 253 C55 254.6 54.6 255.6 53.8 256.4 L47.4 250.2 C48.2 249.4 49.4 249 50.8 249.4 L53 247 L52.4 245.6 Z"/>
    <path d="M50 253.6 L45 258.4" fill="none" stroke="#c6c6c6" stroke-width="1.3" stroke-linecap="round"/>
    <!-- row 9: shape builder / perspective -->
    <g fill="#4b4b4b" stroke="#c6c6c6" stroke-width="2.3"><ellipse cx="20.4" cy="274.4" rx="5.2" ry="4.7"/><ellipse cx="25.2" cy="273.4" rx="5.4" ry="5.5"/></g><g fill="#4b4b4b" stroke="none"><ellipse cx="20.4" cy="274.4" rx="5.2" ry="4.7"/><ellipse cx="25.2" cy="273.4" rx="5.4" ry="5.5"/></g><g fill="none" stroke="#b4b4b4" stroke-width="0.8"><path d="M18 274.2 H26" stroke-dasharray="1 1" stroke-width="1.2"/><path d="M21.6 269.800 C19.6 271.6 19.6 276.6 22 278.4" stroke-width="0.7"/></g>
    <path d="M26.8 273.4 L26.8 283.6 L29.4 281 L34.8 281 Z"/>
    <g fill="none" stroke="#c6c6c6" stroke-width="0.9"><path d="M45.2 267.6 V283.2 L54.8 276.6 V271.2 Z M45.2 275.4 L54.8 274 M48.6 268.8 V281 M51.8 270 V278.6"/></g>
    <g fill="none" stroke="#8a8a8a" stroke-width="0.8"><path d="M54 275.4 H58.4 M52 278.2 H60 M49.6 280.8 H61.6 M46.6 283.2 H62.6"/></g>
    <!-- row 10: mesh / gradient -->
    <g fill="none" stroke="#c6c6c6" stroke-width="0.9"><rect x="16.2" y="297.4" width="15.2" height="13.8"/><path d="M16.2 303.6 C20 301 24 303.800 27 301 C28.6 299.600 29.6 298.6 30 297.4 M16.2 308 C21 305.600 24.600 307.6 31.4 303 M19.800 311.2 C19.6 306 22 301 21.6 297.4 M25.6 311.2 C24.600 307 27 302 26.2 297.4 M22 306.4 C26 307.6 28.6 309 31.4 308.6"/></g>
    <defs><linearGradient id="gr1" x1="0" x2="1" y1="0" y2="0"><stop offset="0" stop-color="#b4b4b4"/><stop offset="1" stop-color="#4a4a4a"/></linearGradient>
    <linearGradient id="gr2" x1="0" x2="1" y1="0" y2="0"><stop offset="0" stop-color="#fff"/><stop offset="1" stop-color="#2a2a2a"/></linearGradient></defs>
    <rect x="46.2" y="297.4" width="15.4" height="13.8" fill="url(#gr1)" stroke="#c6c6c6" stroke-width="0.9"/>
    <!-- row 11: eyedropper / blend -->
    <path d="M17.2 334.8 L26 326" fill="none" stroke="#c6c6c6" stroke-width="3.5" stroke-linecap="round"/>
    <path d="M17.4 334.600 L26.4 325.600" fill="none" stroke="#4b4b4b" stroke-width="1.5" stroke-linecap="round"/>
    <path d="M24.4 323.800 L28.4 327.800" fill="none" stroke="#c6c6c6" stroke-width="1.8" stroke-linecap="round"/>
    <path d="M27.200 325 L29.800 322.400" fill="none" stroke="#c6c6c6" stroke-width="3.4" stroke-linecap="round"/>
    <rect x="44.8" y="321.2" width="7.4" height="7.4"/>
    <rect x="50" y="324.4" width="6.8" height="7.8" rx="2" fill="#8a8a8a" stroke="#c6c6c6" stroke-width="0.8"/>
    <circle cx="58.8" cy="331.2" r="3.7" fill="#4c4c4c" stroke="#c6c6c6" stroke-width="0.9"/>
    <!-- row 12: symbol sprayer / graph -->
    <g><rect x="15.2" y="350.2" width="1.6" height="1.6"/><rect x="17.8" y="350.2" width="1.6" height="1.6"/><rect x="20.4" y="350.2" width="1.6" height="1.6"/><rect x="15.2" y="353" width="1.6" height="1.6"/><rect x="17.8" y="353" width="1.6" height="1.6"/><rect x="15.2" y="355.8" width="1.6" height="1.6"/><rect x="22.6" y="351" width="1.2" height="1.2"/></g>
    <rect x="26.4" y="349.4" width="4" height="2.2"/><rect x="25.2" y="351.8" width="6.4" height="1.2" fill="#9a9a9a"/>
    <rect x="23.8" y="353.4" width="9.2" height="11.4" fill="none" stroke="#c6c6c6" stroke-width="0.9"/>
    <circle cx="28.4" cy="359.4" r="2.2" fill="none" stroke="#c6c6c6" stroke-width="1.1"/>
    <path d="M45.2 349 V363.4 H62.6" fill="none" stroke="#c6c6c6" stroke-width="0.9"/>
    <rect x="48.6" y="356.2" width="3" height="7"/><rect x="53.8" y="350" width="3" height="13.2"/><rect x="59" y="352.2" width="3" height="11"/>
    <!-- row 13: artboard / slice -->
    <path d="M14 381.6 H19.4 M19.4 377 V392.4 H30.6" fill="none" stroke="#c6c6c6" stroke-width="0.9"/>
    <path d="M19.8 382.2 H27.2 L30.4 385.4 V392 H19.8 Z" fill="#686868" stroke="#c6c6c6" stroke-width="0.8"/>
    <path d="M27.2 382.2 V385.4 H30.4 Z"/>
    <path d="M45 393.4 L54.6 381 L59.4 385.6 Z" fill="none" stroke="#c6c6c6" stroke-width="1"/>
    <path d="M55.4 380.2 L57.8 377.8 L62.2 382.4 L60 384.8 Z"/>
    <!-- row 14: hand / zoom -->
    <path d="M19 417.4 C18.4 414.6 17 412.8 15.8 411 C15.4 410.2 16.4 409.4 17.4 410.2 L19.6 412.2 L19 404.6 C19 403.4 20.6 403.4 20.8 404.6 L21.8 409.6 L22 402.6 C22 401.2 23.8 401.2 23.8 402.6 L24.2 409.4 L25.4 403.4 C25.6 402.2 27.2 402.4 27.2 403.6 L26.8 410.2 L29 405.8 C29.6 404.8 31 405.4 30.6 406.6 L28.6 412.6 C28.2 414.6 27.6 416 26.8 417.4 Z"/>
    <circle cx="52.2" cy="407.6" r="5.6" fill="none" stroke="#c6c6c6" stroke-width="1.3"/>
    <path d="M56.2 411.8 L61.2 416.8" fill="none" stroke="#c6c6c6" stroke-width="1.8" stroke-linecap="round"/>
  </g>
  <!-- fill / stroke swatches -->
  <g id="swatches">
    <rect x="27.6" y="446.9" width="34.6" height="34.4" fill="#fff" stroke="#3a3a3a" stroke-width="0.8"/>
    <rect x="37" y="457" width="15" height="14.6" fill="#4b4b4b"/>
    <path d="M28.2 480.8 L61.8 447.4" stroke="#ed1c24" stroke-width="2.2" fill="none"/>
    <rect x="9.6" y="429" width="34.6" height="34.6" fill="#3a3a3a"/>
    <rect x="10.6" y="430" width="32.6" height="32.6" fill="#000" stroke="#e8e8e8" stroke-width="1"/>
    <!-- swap arrows -->
    <path d="M56 433.4 C59 433.4 60.6 435 60.6 438" fill="none" stroke="#c6c6c6" stroke-width="1.3"/>
    <path d="M53.8 433.4 L57.2 430.6 V436.2 Z M60.6 440.8 L57.8 437.4 H63.4 Z" fill="#c6c6c6"/>
    <!-- default fill/stroke -->
    <rect x="13.4" y="474.4" width="6.6" height="5.8" fill="#1a1a1a" stroke="#c6c6c6" stroke-width="0.8"/>
    <rect x="15.2" y="476.2" width="3" height="2.2" fill="#4c4c4c"/>
    <rect x="10.2" y="470.8" width="6" height="5.6" fill="#fff" stroke="#3a3a3a" stroke-width="0.6"/>
    <!-- color / gradient / none -->
    <rect x="9.8" y="489" width="57.6" height="19.4" fill="none" stroke="#585858" stroke-width="0.8" rx="1.5"/>
    <rect x="9.8" y="489" width="18" height="19.4" fill="#313131" rx="1.5"/>
    <path d="M27.8 489 V508.4 M48 489 V508.4" stroke="#585858" stroke-width="0.8"/>
    <rect x="11.8" y="491.8" width="13.8" height="13.2" fill="#000"/>
    <rect x="32" y="491.8" width="12.6" height="13.2" fill="url(#gr2)" stroke="#222" stroke-width="0.8"/>
    <rect x="51.8" y="491.8" width="12.8" height="13.2" fill="#fff" stroke="#222" stroke-width="0.8"/>
    <path d="M52.4 504.4 L64 492.4" stroke="#ed1c24" stroke-width="1.8"/>
    <!-- draw modes -->
    <rect x="9.8" y="513.4" width="57.6" height="17.4" fill="none" stroke="#585858" stroke-width="0.8" rx="1.5"/>
    <rect x="9.8" y="513.4" width="18" height="17.4" fill="#313131" rx="1.5"/>
    <path d="M27.8 513.4 V530.8 M48 513.4 V530.8" stroke="#585858" stroke-width="0.8"/>
    <circle cx="17.6" cy="521.8" r="3.4" fill="none" stroke="#c6c6c6" stroke-width="1.1"/><rect x="18.6" y="522.6" width="5" height="5.2" fill="#c6c6c6"/>
    <rect x="38.8" y="522.6" width="5" height="5.2" fill="#c6c6c6"/><circle cx="37.8" cy="521.8" r="3.4" fill="#6a6a6a" stroke="#c6c6c6" stroke-width="1.1"/>
    <circle cx="57.4" cy="522.4" r="3.2" fill="none" stroke="#666" stroke-width="1"/><path d="M57.4 522.4 h2.4 a2.4 2.4 0 0 0 -2.4 -2.4z" fill="#666"/>
  </g>
</svg>

  <svg id="wmsvg" width="768" height="539" viewBox="0 0 768 539">
    <defs><mask id="wmm" maskUnits="userSpaceOnUse" x="100" y="465" width="180" height="50"><rect x="100" y="465" width="180" height="50" fill="#fff"/><text x="114.3" y="494.4" font-family="'Liberation Sans',sans-serif" font-weight="bold" font-size="18.4" fill="#000">ColorMango.com</text></mask></defs>
    <g font-family="'Liberation Sans',sans-serif" font-weight="bold" font-size="18.4" stroke-linejoin="round">
      <g mask="url(#wmm)">
      <text x="114.3" y="494.4" fill="none" stroke="rgba(0,0,0,0.16)" stroke-width="4.4">ColorMango.com</text>
      <text x="114.3" y="494.4" fill="none" stroke="rgba(255,255,255,0.62)" stroke-width="3">ColorMango.com</text>
      </g>
      <text x="114.3" y="494.4" fill="rgba(160,160,160,0.33)">ColorMango.com</text>
    </g>
  </svg>
  <div id="tip">Puppet Warp Tool</div>
</div>
</body>
</html>
